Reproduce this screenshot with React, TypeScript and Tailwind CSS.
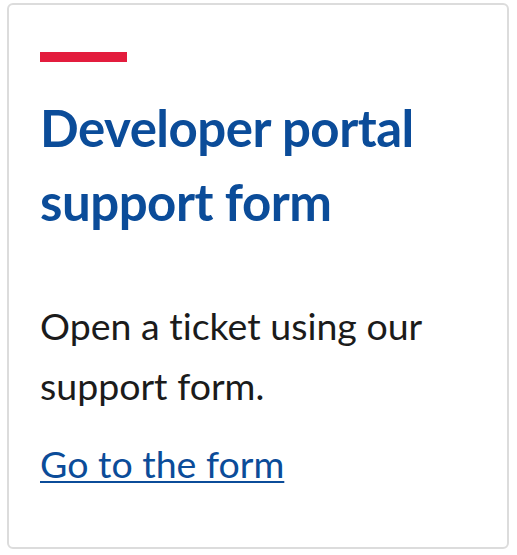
import React from "react";

const App = () => {
  return (
    <div
      className="w-[517px] h-[555px] bg-white pl-[7px] pt-[3px]"
      style={{ fontFamily: "Lato, 'Noto Sans', sans-serif", fontVariantLigatures: "none" }}
    >
      <div className="w-[502px] h-[546px] border-2 border-[#dcdcdc] rounded-[6px] px-[31px] pt-[47px]">
        <div className="w-[87px] h-[10px] bg-[#e31c3d]" />
        <h2 className="mt-[29px] text-[51px] leading-[74px] font-bold text-[#0b4c99] tracking-[-0.5px]">
          Developer portal support form
        </h2>
        <p className="mt-[57px] text-[37.5px] leading-[60px] text-[#1b1b1b]">
          Open a ticket using our support form.
        </p>
        <a
          href="#"
          className="block mt-[18px] text-[37.5px] leading-[60px] text-[#0b4c99] underline underline-offset-[3px] decoration-[2px] w-fit"
        >
          Go to the form
        </a>
      </div>
    </div>
  );
};

export default App;
